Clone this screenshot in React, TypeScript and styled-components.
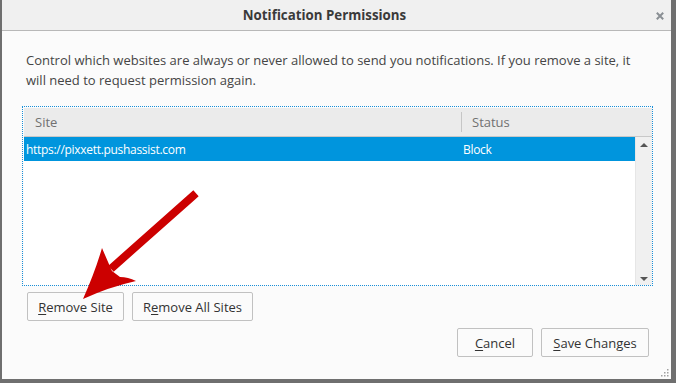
import React from "react";
import styled, { createGlobalStyle } from "styled-components";

const Global = createGlobalStyle`
  html, body { margin: 0; padding: 0; background: #707070; }
  body { font-family: "Open Sans", "Noto Sans", sans-serif; }
  #root { width: 676px; height: 383px; }
`;

const Window = styled.div`
  position: relative;
  box-sizing: border-box;
  width: 676px;
  height: 383px;
  display: flex;
  flex-direction: column;
  background: #fbfbfb;
  border-left: 2px solid #6f6f6f;
  border-right: 5px solid #6f6f6f;
  border-bottom: 4px solid #6f6f6f;
  overflow: hidden;
`;

const TitleBar = styled.div`
  box-sizing: border-box;
  height: 31px;
  flex: none;
  display: flex;
  align-items: center;
  justify-content: center;
  padding-right: 24px;
  background: #f0f0f0;
  border-bottom: 1px solid #b8b8b8;
  position: relative;
`;

const Title = styled.div`
  font-size: 13.3px;
  font-weight: 700;
  color: #3a3a3a;
`;

const Close = styled.svg`
  display: block;
  position: absolute;
  right: 7px;
  top: 12px;
`;

const Body = styled.div`
  flex: 1;
  display: flex;
  flex-direction: column;
  padding: 19px 18px 0 20px;
`;

const Description = styled.p`
  margin: 0 0 16px 4px;
  font-size: 13px;
  line-height: 20px;
  color: #454545;
`;

const Table = styled.div`
  box-sizing: border-box;
  height: 180px;
  border: 1px dotted #1a8fd8;
  padding: 1px 0 0 1px;
  display: flex;
  flex-direction: column;
`;

const Header = styled.div`
  height: 28px;
  flex: none;
  display: flex;
  align-items: center;
  background: #ebebeb;
  border-bottom: 1px solid #c8c8c8;
`;

const HeadCell = styled.div<{ $w?: number; $sep?: boolean }>`
  box-sizing: border-box;
  ${(p) => (p.$w ? `width: ${p.$w}px;` : "flex: 1;")}
  padding-left: ${(p) => (p.$sep ? 10 : 11)}px;
  font-size: 13px;
  color: #717171;
  height: 20px;
  line-height: 20px;
  border-left: ${(p) => (p.$sep ? "1px solid #c6c6c6" : "none")};
`;

const ListArea = styled.div`
  flex: 1;
  display: flex;
  min-height: 0;
`;

const Rows = styled.div`
  flex: 1;
  background: #fff;
`;

const Row = styled.div<{ $selected?: boolean }>`
  height: 24px;
  display: flex;
  align-items: center;
  background: ${(p) => (p.$selected ? "#0095dd" : "transparent")};
  color: ${(p) => (p.$selected ? "#fff" : "#333")};
  font-size: 12px;
  letter-spacing: -0.3px;
`;

const Cell = styled.div<{ $w?: number; $pad: number }>`
  box-sizing: border-box;
  ${(p) => (p.$w ? `width: ${p.$w}px;` : "flex: 1;")}
  padding-left: ${(p) => p.$pad}px;
  white-space: nowrap;
`;

const Scrollbar = styled.div`
  width: 17px;
  flex: none;
  background: #f0f0f0;
  border-left: 1px solid #e6e6e6;
  box-sizing: border-box;
  display: flex;
  flex-direction: column;
  justify-content: space-between;
  align-items: center;
  padding: 6px 0 4px;
`;

const Arrow = styled.div<{ $down?: boolean }>`
  width: 0;
  height: 0;
  border-left: 4px solid transparent;
  border-right: 4px solid transparent;
  ${(p) =>
    p.$down
      ? "border-top: 4px solid #555;"
      : "border-bottom: 4px solid #555;"}
`;

const ButtonRow = styled.div<{ $end?: boolean }>`
  display: flex;
  gap: 8px;
  justify-content: ${(p) => (p.$end ? "flex-end" : "flex-start")};
  margin: ${(p) => (p.$end ? "7px 4px 0 0" : "6px 0 0 5px")};
`;

const Button = styled.button<{ $w: number }>`
  box-sizing: border-box;
  width: ${(p) => p.$w}px;
  height: 29px;
  padding: 0;
  border: 1px solid #c1c1c1;
  border-radius: 2px;
  background: #fbfbfb;
  font-family: "Open Sans", "Noto Sans", sans-serif;
  font-size: 13px;
  color: #333;
  cursor: default;
`;

const Key = styled.span`
  text-decoration: underline;
  text-underline-offset: 2px;
`;

const Grip = styled.svg`
  position: absolute;
  right: 2px;
  bottom: 2px;
`;

const Pointer = styled.svg`
  position: absolute;
  left: 0;
  top: 0;
  pointer-events: none;
`;

export default function App() {
  return (
    <>
      <Global />
      <Window>
        <TitleBar>
          <Title>Notification Permissions</Title>
          <Close width="8" height="8" viewBox="0 0 8 8">
            <path d="M0.8 0.8 L7.2 7.2 M7.2 0.8 L0.8 7.2" stroke="#8a8f94" strokeWidth="2" />
          </Close>
        </TitleBar>
        <Body>
          <Description>
            Control which websites are always or never allowed to send you notifications. If you remove a site, it
            will need to request permission again.
          </Description>
          <Table>
            <Header>
              <HeadCell $w={437}>Site</HeadCell>
              <HeadCell $sep>Status</HeadCell>
            </Header>
            <ListArea>
              <Rows>
                <Row $selected>
                  <Cell $w={437} $pad={2}>https://pixxett.pushassist.com</Cell>
                  <Cell $pad={2}>Block</Cell>
                </Row>
              </Rows>
              <Scrollbar>
                <Arrow />
                <Arrow $down />
              </Scrollbar>
            </ListArea>
          </Table>
          <ButtonRow>
            <Button $w={97}>
              <Key>R</Key>emove Site
            </Button>
            <Button $w={121}>
              R<Key>e</Key>move All Sites
            </Button>
          </ButtonRow>
          <ButtonRow $end>
            <Button $w={76}>
              <Key>C</Key>ancel
            </Button>
            <Button $w={108}>
              <Key>S</Key>ave Changes
            </Button>
          </ButtonRow>
        </Body>
        <Grip width="9" height="9" viewBox="0 0 9 9">
          {[
            [7, 1],
            [7, 4],
            [4, 4],
            [7, 7],
            [4, 7],
            [1, 7],
          ].map(([x, y], i) => (
            <rect key={i} x={x} y={y} width="1.5" height="1.5" fill="#a0a0a0" />
          ))}
        </Grip>
        <Pointer width="676" height="383" viewBox="0 0 676 383">
          <line x1="191" y1="196" x2="112" y2="266" stroke="#cc0000" strokeWidth="8" strokeLinecap="square" />
          <path
            d="M81 299 Q93 272 100 248 Q106 262 110 271 L118 277 Q126 277 134 281 Q107 287 81 299 Z"
            fill="#cc0000"
          />
        </Pointer>
      </Window>
    </>
  );
}
